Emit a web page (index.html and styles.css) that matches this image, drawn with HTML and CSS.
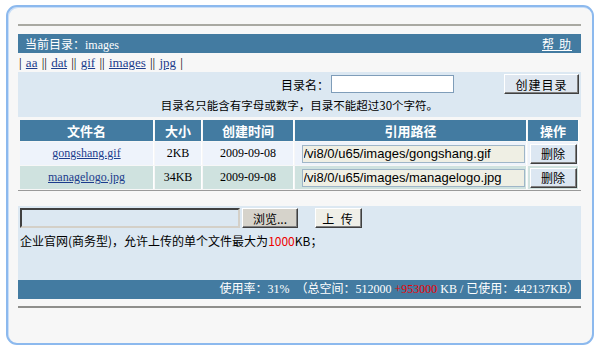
FILE: index.html
```html
<!DOCTYPE html>
<html lang="zh-CN">
<head>
    <meta charset="UTF-8">
    <title>文件管理</title>
    <link rel="stylesheet" href="styles.css">
</head>
<body>
    <div class="frame">
        <div class="rule"></div>

        <div class="title-bar">
            <span>当前目录：images</span>
            <a href="#" class="help">帮 助</a>
        </div>

        <div class="dir-links">
            | <a href="#">aa</a> || <a href="#">dat</a> || <a href="#">gif</a> || <a href="#">images</a> || <a href="#">jpg</a> |
        </div>

        <div class="mkdir-box">
            <div class="mkdir-row">
                <label for="dirname">目录名：</label>
                <input type="text" id="dirname" class="dir-input">
                <button class="btn create-btn">创建目录</button>
            </div>
            <p class="mkdir-tip">目录名只能含有字母或数字，目录不能超过30个字符。</p>
        </div>

        <table class="file-table">
            <thead>
                <tr>
                    <th class="c-name">文件名</th>
                    <th class="c-size">大小</th>
                    <th class="c-date">创建时间</th>
                    <th class="c-path">引用路径</th>
                    <th class="c-op">操作</th>
                </tr>
            </thead>
            <tbody>
                <tr class="row-a">
                    <td><a href="#">gongshang.gif</a></td>
                    <td>2KB</td>
                    <td>2009-09-08</td>
                    <td class="path-cell"><input type="text" class="path-input" value="/vi8/0/u65/images/gongshang.gif"></td>
                    <td><button class="btn del-btn">删除</button></td>
                </tr>
                <tr class="row-b">
                    <td><a href="#">managelogo.jpg</a></td>
                    <td>34KB</td>
                    <td>2009-09-08</td>
                    <td class="path-cell"><input type="text" class="path-input" value="/vi8/0/u65/images/managelogo.jpg"></td>
                    <td><button class="btn del-btn">删除</button></td>
                </tr>
            </tbody>
        </table>

        <div class="upload-box">
            <div class="upload-row">
                <input type="text" class="file-path">
                <button class="btn browse-btn">浏览...</button>
                <button class="btn upload-btn">上 传</button>
            </div>
            <p class="upload-tip">企业官网(商务型)，允许上传的单个文件最大为<span class="red">1000</span>KB；</p>
        </div>

        <div class="status-bar">
            使用率：31%　（总空间：512000 <span class="red">+953000</span> KB / 已使用：442137KB）
        </div>

        <div class="rule rule-bottom"></div>
    </div>
</body>
</html>
```

FILE: styles.css
```css
:root {
    --bar-color: #437ba1;
    --panel-color: #dce8f2;
    --link-color: #1c3c8c;
}

* {
    margin: 0;
    padding: 0;
    box-sizing: border-box;
}

body {
    background: #ffffff;
    font-family: "Liberation Serif", "Noto Sans CJK SC", serif;
    font-size: 12px;
    color: #000;
}

.frame {
    margin: 5px 6px 0 6px;
    height: 340px;
    border: 2px solid #8cb9ee;
    border-radius: 11px;
    background: #f7f7f7;
    padding: 17px 11px 0 10px;
    box-shadow: inset 1px 1px 0 #c9def7;
}

.rule {
    height: 2px;
    background: #a9a9a2;
    margin-bottom: 8px;
}

.rule-bottom {
    margin-top: 7px;
    background: #8f8f8c;
}

.title-bar {
    height: 19px;
    background: var(--bar-color);
    color: #fff;
    display: flex;
    align-items: center;
    justify-content: space-between;
    padding: 0 9px 0 7px;
    font-size: 12px;
}

.help {
    color: #fff;
    letter-spacing: 1px;
}

.dir-links {
    height: 19px;
    line-height: 19px;
    padding-left: 1px;
    font-size: 13px;
    word-spacing: 1px;
}

.dir-links a {
    color: var(--link-color);
}

.mkdir-box {
    background: var(--panel-color);
    height: 45px;
    padding-top: 2px;
}

.mkdir-row {
    display: flex;
    align-items: center;
    justify-content: flex-end;
    padding-right: 2px;
    height: 20px;
}

.mkdir-row label {
    font-family: "Noto Sans CJK SC", sans-serif;
    margin-right: 2px;
}

.dir-input {
    width: 123px;
    height: 18px;
    border: 1px solid #7f9db9;
    background: #fff;
    margin-right: 50px;
}

.btn {
    font-family: "Noto Sans CJK SC", sans-serif;
    font-size: 12px;
    color: #000;
    border: 1px solid;
    border-color: #fff #404040 #404040 #fff;
    box-shadow: inset -1px -1px 0 #808080;
    background: #d4d0c8;
    cursor: pointer;
}

.create-btn {
    width: 75px;
    height: 20px;
    background: #dfe7f0;
    letter-spacing: 1px;
}

.mkdir-tip {
    text-align: center;
    font-family: "Noto Sans CJK SC", sans-serif;
    font-size: 11.5px;
    line-height: 20px;
    margin-top: 1px;
}

.file-table {
    width: 100%;
    margin-top: 2px;
    border-collapse: separate;
    border-spacing: 1px;
    padding: 0 1px;
    background: #f7f7f7;
    box-shadow: 0 1px 0 #999;
    table-layout: fixed;
}

.file-table th {
    background: var(--bar-color);
    color: #fff;
    font-family: "Noto Sans CJK SC", sans-serif;
    font-weight: bold;
    font-size: 13px;
    height: 21px;
    border-right: 1px solid #fff;
}

.file-table td {
    text-align: center;
    height: 23px;
    border-right: 1px solid #fff;
}

.c-name { width: 134px; }
.c-size { width: 47px; }
.c-date { width: 91px; }
.c-op { width: 51px; }

.row-a td {
    background: #eef3fb;
}

.row-b td {
    background: #cfe2df;
}

.file-table td a {
    color: var(--link-color);
}

.path-cell {
    text-align: left;
}

.path-input {
    width: 223px;
    height: 18px;
    margin-left: 5px;
    border: 1px solid #9fb6c8;
    background: #efefe4;
    font-family: "Liberation Sans", sans-serif;
    font-size: 13px;
    padding-left: 1px;
}

.del-btn {
    width: 47px;
    height: 20px;
    background: #dce7f2;
}

.upload-box {
    margin-top: 16px;
    background: var(--panel-color);
    height: 74px;
    padding: 2px 2px 0;
}

.upload-row {
    display: flex;
    align-items: center;
}

.file-path {
    width: 220px;
    height: 20px;
    border: 2px solid;
    border-color: #404040 #d4d0c8 #d4d0c8 #404040;
    background: var(--panel-color);
}

.browse-btn {
    width: 56px;
    height: 20px;
    margin-left: 2px;
    background: #d6d3cb;
}

.upload-btn {
    width: 47px;
    height: 20px;
    margin-left: 17px;
    background: #efefe8;
    letter-spacing: 2px;
}

.upload-tip {
    margin-top: 5px;
    font-family: "Noto Sans CJK SC", sans-serif;
    line-height: 16px;
}

.red {
    color: #ee0000;
}

.status-bar {
    height: 19px;
    line-height: 19px;
    background: var(--bar-color);
    color: #fff;
    text-align: right;
    padding-right: 2px;
    font-family: "Liberation Serif", "Noto Sans CJK SC", serif;
}
```
